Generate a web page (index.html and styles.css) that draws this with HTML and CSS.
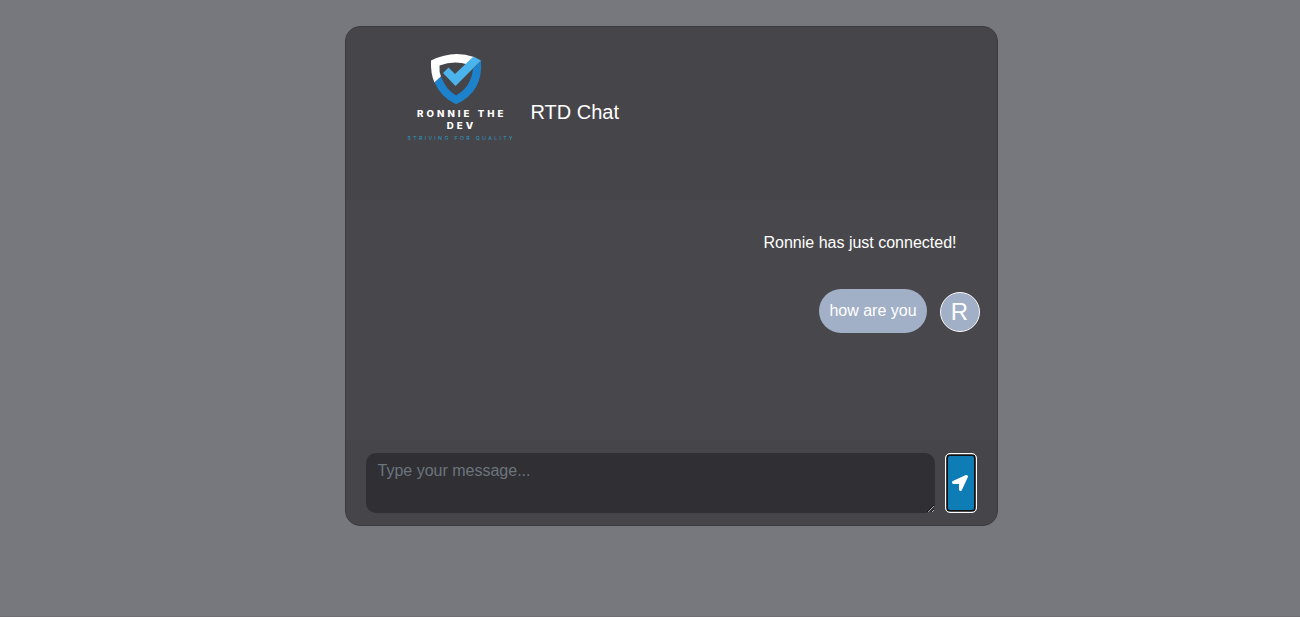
FILE: index.html
```html
<!DOCTYPE html>
<html lang="en">
<head>
<meta charset="utf-8">
<title>RTD Chat</title>
<link rel="stylesheet" href="styles.css">
</head>
<body>
<main class="card">
  <header class="card-header">
    <svg class="logo" width="120" height="100" viewBox="0 0 120 100" role="img" aria-label="Ronnie the Dev">
      <path class="logo-white" d="M31 15.500Q53 4.500 74 12L68 19.500Q54 15 39.500 20.500Q39 27 41 31.500L34.500 37.500Q30.500 29 31 15.500Z"/>
      <path class="logo-blue" d="M81 15.500Q83.500 47 56 59.300Q41 52.500 34.500 37.500L41 31.500Q45.500 44 56 50.500Q71 42 73 24Z"/>
      <path class="logo-sky" d="M43 28L48.500 22.500L55 29L73.500 11.500L81 15.500L55.500 41Z"/>
      <text class="logo-name" x="17" y="71.600" textLength="89.500" lengthAdjust="spacingAndGlyphs">RONNIE THE</text>
      <text class="logo-name" x="46.800" y="84.200" textLength="29.500" lengthAdjust="spacingAndGlyphs">DEV</text>
      <text class="logo-tag" x="7.500" y="94.500" textLength="107.500" lengthAdjust="spacingAndGlyphs">STRIVING FOR QUALITY</text>
    </svg>
    <h1 class="title">RTD Chat</h1>
  </header>
  <section class="card-body">
    <p class="notice">Ronnie has just connected!</p>
    <div class="message">
      <div class="bubble">how are you</div>
      <div class="avatar">R</div>
    </div>
  </section>
  <form class="card-footer">
    <textarea class="input" placeholder="Type your message..."></textarea>
    <button class="send" type="button" aria-label="Send">
      <svg width="16" height="16" viewBox="0 0 512 512"><path fill="currentColor" d="M444.500 3.500L28.700 195.400c-48 22.400-32 92.800 19.200 92.800h175.900v175.900c0 51.200 70.400 67.200 92.800 19.200l191.900-415.800c16-38.400-25.600-80-64-64z"/></svg>
    </button>
  </form>
</main>
</body>
</html>
```
FILE: styles.css
```css
* { box-sizing: border-box; }
body {
  margin: 0;
  height: 617px;
  padding: 26px 0 0 345px;
  background: #77787d;
  border-bottom: 1px solid #6f6e73;
  color: #fff;
  font: 16px/24px "Liberation Sans", Arial, sans-serif;
  overflow: hidden;
}
.card {
  display: flex;
  flex-direction: column;
  width: 653px;
  height: 500px;
  border: 1px solid #3c3b40;
  border-radius: 15px;
  background: #48474b;
  overflow: hidden;
}
.card-header {
  display: flex;
  align-items: flex-start;
  height: 173px;
  padding: 18px 0 0 54px;
  background: #464549;
}
.logo { flex: none; }
.logo-white { fill: #fff; }
.logo-blue { fill: #1b82cb; }
.logo-sky { fill: #4bb4ed; }
.logo-name { fill: #fff; font: 800 8.600px Inter, sans-serif; letter-spacing: 2.700px; }
.logo-tag { fill: #2c9cc4; font: 4.500px Inter, sans-serif; letter-spacing: 2px; }
.title {
  margin: 55px 0 0 10.500px;
  font-size: 20px;
  font-weight: 400;
  line-height: 24px;
}
.card-body {
  display: flex;
  flex-direction: column;
  align-items: flex-end;
  height: 240px;
  padding: 31px 17px 0 0;
}
.notice { margin: 0 23.500px 34px 0; }
.message { display: flex; align-items: center; gap: 13px; }
.bubble {
  width: 108px;
  height: 44px;
  padding: 10px 9px 10px 10.400px;
  border-radius: 25px;
  background: #a2b0c7;
  white-space: nowrap;
}
.avatar {
  width: 40px;
  height: 40px;
  margin-top: 2px;
  padding-right: 1px;
  border: 1px solid #f5f6fa;
  border-radius: 50%;
  background: #a2b0c7;
  font-size: 24px;
  line-height: 38px;
  text-align: center;
}
.card-footer {
  display: flex;
  gap: 10px;
  flex: 1;
  padding: 13px 20px 0;
  background: #464549;
}
.input {
  width: 569px;
  height: 60px;
  padding: 6px 11.500px;
  border: 0;
  border-radius: 10px;
  background: #302f34;
  color: #fff;
  font: inherit;
  overflow: hidden;
  resize: vertical;
}
.input::placeholder { color: #6c757d; }
.send {
  display: flex;
  align-items: center;
  justify-content: center;
  width: 32px;
  height: 60px;
  padding: 0 1.200px 0 0;
  border: 1px solid #fff;
  border-radius: 5px;
  background: #0f7db5;
  box-shadow: inset 0 0 0 0.200px #fff, inset 0 0 0 2px #101010;
  color: #fff;
}
.send svg { margin-left: -0.600px; }
```
